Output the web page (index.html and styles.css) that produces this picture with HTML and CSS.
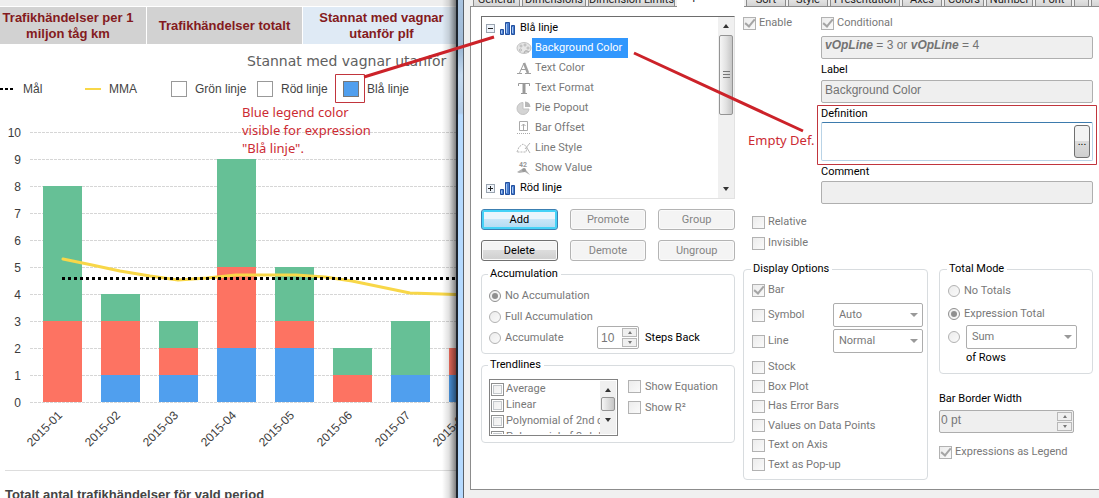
FILE: index.html
```html
<!DOCTYPE html>
<html lang="sv">
<head>
<meta charset="utf-8">
<title>Trafikhändelser</title>
<link rel="stylesheet" href="styles.css">
</head>
<body>
<div class="screen">
  <main class="report">
    <div class="strip"></div>
    <nav class="report-tabs">
      <a class="rtab" href="#km">Trafikhändelser per 1 miljon tåg km</a>
      <a class="rtab" href="#totalt">Trafikhändelser totalt</a>
      <a class="rtab rtab-on" href="#plf">Stannat med vagnar utanför plf</a>
    </nav>
    <h1 class="chart-title">Stannat med vagnar utanför</h1>
    <div class="legend-row">
      <span class="key"><i class="dots"></i>Mål</span>
      <span class="key"><i class="dash"></i>MMA</span>
      <span class="key"><i class="swatch"></i>Grön linje</span>
      <span class="key"><i class="swatch"></i>Röd linje</span>
      <span class="key"><i class="swatch blue"></i>Blå linje</span>
    </div>
    <svg class="chart" width="520" height="366" viewBox="0 104 520 366">
      <g class="grid">
        <path d="M30 132.500H520M30 159.500H520M30 186.500H520M30 213.500H520M30 240.500H520M30 267.500H520M30 294.500H520M30 321.500H520M30 348.500H520M30 375.500H520M30 402.500H520"/>
      </g>
      <g class="axis" text-anchor="end">
        <text x="21" y="137">10</text><text x="21" y="164">9</text><text x="21" y="191">8</text><text x="21" y="218">7</text><text x="21" y="245">6</text><text x="21" y="272">5</text><text x="21" y="299">4</text><text x="21" y="326">3</text><text x="21" y="353">2</text><text x="21" y="380">1</text><text x="21" y="407">0</text>
      </g>
      <path class="g" d="M43 186h39v135H43zM101 294h39v27h-39zM159 321h39v27h-39zM217 159h39v108h-39zM275 267h39v54h-39zM333 348h39v27h-39zM391 321h39v54h-39z"/>
      <path class="r" d="M43 321h39v81H43zM101 321h39v54h-39zM159 348h39v27h-39zM217 267h39v81h-39zM275 321h39v27h-39zM333 375h39v27h-39zM449 348h39v27h-39z"/>
      <path class="b" d="M101 375h39v27h-39zM159 375h39v27h-39zM217 348h39v54h-39zM275 348h39v54h-39zM391 375h39v27h-39zM449 375h39v27h-39z"/>
      <path class="mma" d="M63 259L92 265L120 271L150 276L178 280L207 278L236 275H296L325 277L352 281L381 287L410 293L468 295"/>
      <path class="goal" d="M62 278.500H520"/>
      <g class="axis dates" text-anchor="end">
        <text transform="translate(63 416) rotate(-45)">2015-01</text>
        <text transform="translate(121 416) rotate(-45)">2015-02</text>
        <text transform="translate(179 416) rotate(-45)">2015-03</text>
        <text transform="translate(237 416) rotate(-45)">2015-04</text>
        <text transform="translate(295 416) rotate(-45)">2015-05</text>
        <text transform="translate(353 416) rotate(-45)">2015-06</text>
        <text transform="translate(411 416) rotate(-45)">2015-07</text>
        <text transform="translate(469 416) rotate(-45)">2015-08</text>
      </g>
    </svg>
    <h2 class="below">Totalt antal trafikhändelser för vald period</h2>
    <div class="shadow"></div>
  </main>

  <section class="dialog">
    <div class="glass"></div>
    <div class="client">
      <div class="tabs">
        <button class="tab w-general">General</button>
        <button class="tab w-dim">Dimensions</button>
        <button class="tab w-limits">Dimension Limits</button>
        <button class="tab tab-on">Expressions</button>
        <button class="tab w-short">Sort</button>
        <button class="tab w-short">Style</button>
        <button class="tab w-pres">Presentation</button>
        <button class="tab w-short">Axes</button>
        <button class="tab w-short">Colors</button>
        <button class="tab w-general">Number</button>
        <button class="tab w-font">Font</button>
        <button class="tab w-nav" aria-label="Previous tabs"></button>
        <button class="tab w-nav" aria-label="Next tabs"></button>
      </div>
      <div class="panel">
        <div class="left">
          <div class="tree">
            <ul class="tree-list">
              <li class="node"><button class="expander" aria-label="Collapse"><svg width="9" height="9"><path d="M2 4.500H7" stroke="#222"/></svg></button>
                <svg class="bars" width="15" height="13"><path class="bar-ico" d="M.5 7.500h3v5h-3zM5.500 .5h4v12h-4zM11.500 3.500h3v9h-3z"/><path class="bar-lite" d="M1.500 8.500v3M6.500 2v9M12.500 5v6"/></svg><span>Blå linje</span></li>
              <li class="leaf"><svg width="16" height="16"><ellipse cx="8" cy="8" rx="7" ry="5.500" fill="#e6e6e6" stroke="#c4c4c4"/><g fill="#fff" stroke="#b0b0b0"><circle cx="5" cy="6" r="1"/><circle cx="9" cy="5" r="1"/><circle cx="12" cy="8" r="1"/><circle cx="4.500" cy="10" r="1"/></g><path d="M8 13q1-4 5-1" fill="#ccc" stroke="#aaa"/></svg><span class="selected">Background Color</span></li>
              <li class="leaf"><svg width="16" height="16" fill="none" stroke="#a0a0a0"><path d="M3.500 13L8 3" /><path d="M8 3l4 10" stroke-width="2.500"/><path d="M5 9.500h5M1 13.500h5M9 13.500h6"/></svg><span>Text Color</span></li>
              <li class="leaf"><svg width="16" height="16" fill="none" stroke="#999"><path d="M2.500 6V3.500h11V6M5 13.500h6"/><path d="M8 3v10" stroke-width="3"/></svg><span>Text Format</span></li>
              <li class="leaf"><svg width="16" height="16"><path d="M7 8V2.500A6 6 0 1 0 13 9H7z" fill="#d4d4d4" stroke="#c2c2c2"/><path d="M9 7V1.500a6 6 0 0 1 5.500 5.500z" fill="#b7b7b7"/></svg><span>Pie Popout</span></li>
              <li class="leaf"><svg width="16" height="16" fill="none" stroke="#aaa"><path d="M3.500 1.500h8v9h-8zM7.500 10V4M5.500 6l2-2 2 2"/><path d="M1 13.500h14" stroke-dasharray="1 1"/></svg><span>Bar Offset</span></li>
              <li class="leaf"><svg width="16" height="16" fill="none" stroke="#b5b5b5"><path d="M1 12l2-5 4-3 4 3-1 5H1" stroke-dasharray="2 1"/><path d="M9 9l5-6M11 8l3 5"/></svg><span>Line Style</span></li>
              <li class="leaf"><svg width="16" height="16"><text x="3" y="7" class="tiny">42</text><path d="M1 12l5-3 4 1 4 5-5-3-6 1z" fill="#b0b0b0"/><circle cx="8" cy="10" r="2" fill="#999"/></svg><span>Show Value</span></li>
              <li class="node"><button class="expander" aria-label="Expand"><svg width="9" height="9"><path d="M2 4.500H7M4.500 2V7" stroke="#222"/></svg></button>
                <svg class="bars" width="15" height="13"><path class="bar-ico" d="M.5 7.500h3v5h-3zM5.500 .5h4v12h-4zM11.500 3.500h3v9h-3z"/><path class="bar-lite" d="M1.500 8.500v3M6.500 2v9M12.500 5v6"/></svg><span>Röd linje</span></li>
            </ul>
            <div class="scroll"><i class="up"></i><i class="thumb"></i><i class="down"></i></div>
          </div>
          <div class="buttons">
            <button class="btn primary">Add</button><button class="btn" disabled>Promote</button><button class="btn" disabled>Group</button>
            <button class="btn">Delete</button><button class="btn" disabled>Demote</button><button class="btn" disabled>Ungroup</button>
          </div>
          <fieldset class="box accum">
            <legend>Accumulation</legend>
            <label class="opt"><input type="radio" name="acc" checked disabled>No Accumulation</label>
            <label class="opt"><input type="radio" name="acc" disabled>Full Accumulation</label>
            <div class="acc-row">
              <label class="opt"><input type="radio" name="acc" disabled>Accumulate</label>
              <span class="spin steps"><input type="text" id="steps" value="10" disabled><span class="spin-btns"><i class="up"></i><i class="down"></i></span></span>
              <label class="dark" for="steps">Steps Back</label>
            </div>
          </fieldset>
          <fieldset class="box trend">
            <legend>Trendlines</legend>
            <div class="trend-row">
              <div class="listbox">
                <div class="items">
                  <label class="item"><input type="checkbox" disabled>Average</label>
                  <label class="item"><input type="checkbox" disabled>Linear</label>
                  <label class="item"><input type="checkbox" disabled>Polynomial of 2nd degree</label>
                  <label class="item"><input type="checkbox" disabled>Polynomial of 3rd degree</label>
                </div>
                <div class="scroll small"><i class="up"></i><i class="thumb"></i><i class="down"></i></div>
              </div>
              <div class="trend-opts">
                <label class="opt"><input type="checkbox" disabled>Show Equation</label>
                <label class="opt"><input type="checkbox" disabled>Show R²</label>
              </div>
            </div>
          </fieldset>
        </div>

        <div class="right">
          <div class="form">
            <label class="opt"><input type="checkbox" checked disabled>Enable</label>
            <div class="fields">
              <label class="opt"><input type="checkbox" checked disabled>Conditional</label>
              <div class="field cond"><b>vOpLine</b> = 3 or <b>vOpLine</b> = 4</div>
              <label class="dark" for="lbl">Label</label>
              <input class="field" id="lbl" type="text" value="Background Color" disabled>
              <label class="dark" for="def">Definition</label>
              <div class="definition"><textarea id="def"></textarea><button class="more" aria-label="Edit definition">...</button></div>
              <label class="dark" for="com">Comment</label>
              <input class="field" id="com" type="text" disabled>
            </div>
          </div>
          <div class="flags">
            <label class="opt"><input type="checkbox" disabled>Relative</label>
            <label class="opt"><input type="checkbox" disabled>Invisible</label>
          </div>
          <div class="lower">
            <fieldset class="box display">
              <legend>Display Options</legend>
              <label class="opt first"><input type="checkbox" checked disabled>Bar</label>
              <div class="pick"><label class="opt"><input type="checkbox" disabled>Symbol</label><span class="sel"><select aria-label="Symbol style" disabled><option>Auto</option></select></span></div>
              <div class="pick"><label class="opt"><input type="checkbox" disabled>Line</label><span class="sel"><select aria-label="Line style" disabled><option>Normal</option></select></span></div>
              <div class="checks">
                <label class="opt"><input type="checkbox" disabled>Stock</label>
                <label class="opt"><input type="checkbox" disabled>Box Plot</label>
                <label class="opt"><input type="checkbox" disabled>Has Error Bars</label>
                <label class="opt"><input type="checkbox" disabled>Values on Data Points</label>
                <label class="opt"><input type="checkbox" disabled>Text on Axis</label>
                <label class="opt"><input type="checkbox" disabled>Text as Pop-up</label>
              </div>
            </fieldset>
            <div class="side">
              <fieldset class="box total">
                <legend>Total Mode</legend>
                <label class="opt"><input type="radio" name="tot" disabled>No Totals</label>
                <label class="opt"><input type="radio" name="tot" checked disabled>Expression Total</label>
                <div class="sum"><input type="radio" name="tot" aria-label="Aggregate of rows" disabled><span class="sel"><select id="agg" disabled><option>Sum</option></select></span></div>
                <label class="dark rows" for="agg">of Rows</label>
              </fieldset>
              <label class="dark bw" for="bw">Bar Border Width</label>
              <span class="spin width"><input type="text" id="bw" value="0 pt" disabled><span class="spin-btns"><i class="up"></i><i class="down"></i></span></span>
              <label class="opt asleg"><input type="checkbox" checked disabled>Expressions as Legend</label>
            </div>
          </div>
        </div>
      </div>
    </div>
  </section>

  <svg class="marks" width="1099" height="498">
    <path class="thin" d="M335.500 74.500h29v28h-29zM817.500 105.500h279v59h-279z"/>
    <path class="arrow" d="M364 77L494 37M634 53L803 131"/>
  </svg>
  <p class="note note-legend">Blue legend color<br>visible for expression<br>"Blå linje".</p>
  <p class="note note-def">Empty Def.</p>
</div>
</body>
</html>
```
FILE: styles.css
```css
* { box-sizing: border-box; }
body { margin: 0; background: #fff; overflow: hidden; }
button, input, select, textarea { font: inherit; margin: 0; }
button { padding: 0; }
.screen { position: relative; display: grid; grid-template-columns: 456fr 643fr; height: 100vh; overflow: hidden; }

/* Report */
.report { position: relative; overflow: hidden; min-width: 0; font: 12px/16px "Liberation Sans", Arial, sans-serif; color: #444; }
.strip { height: 6px; background: #eee; }
.report-tabs { display: grid; grid-template-columns: 146fr 155fr 153fr; gap: 1px; padding-top: 1px; }
.rtab { display: flex; align-items: center; justify-content: center; height: 37px; background: #d2d2d2; color: #841a20; font-size: 13px; font-weight: bold; text-align: center; text-decoration: none; }
.rtab:first-child { padding-right: 10px; }
.rtab-on { background: #dfeaf5; padding: 0 8px 0 12px; }
.chart-title { margin: 8px 0 0 247px; font: 14px/18px "DejaVu Sans", Verdana, sans-serif; color: #606060; white-space: nowrap; }
.legend-row { display: grid; grid-template-columns: 85px 86px 86px 86px auto; height: 30px; margin-top: 4px; align-items: center; }
.key { display: flex; align-items: center; gap: 8px; white-space: nowrap; }
.dots { width: 15px; height: 2px; background: repeating-linear-gradient(90deg, #000 0 3px, transparent 3px 5px); }
.dash { width: 16px; height: 2px; background: #f8d748; }
.swatch { width: 16px; height: 16px; border: 1px solid #999; background: #fff; }
.swatch.blue { background: #509fee; border-color: #777; }
.chart { display: block; }
.grid { fill: none; stroke: #d6d6d6; stroke-dasharray: 3 1; }
.axis { font-size: 12px; fill: #3c3c3c; }
.g { fill: #66c096; }
.r { fill: #fd7362; }
.b { fill: #509fee; }
.mma { fill: none; stroke: #f8d748; stroke-width: 3; stroke-linecap: round; stroke-linejoin: round; }
.goal { stroke: #000; stroke-width: 3; stroke-dasharray: 3 3; }
.below { margin: 0 0 0 5px; padding-top: 16px; border-top: 1px solid #ddd; font-size: 13px; line-height: 16px; white-space: nowrap; }
.shadow { position: absolute; top: 0; right: 0; bottom: 0; width: 14px; background: linear-gradient(90deg, transparent, rgba(0,0,0,.12) 50%, rgba(0,0,0,.5)); }

/* Dialog */
.dialog { display: flex; min-width: 0; border-left: 2px solid #1d242d; background: #f0f0f0; font: 11px/14px Roboto, "Liberation Sans", sans-serif; color: #787878; }
.glass { flex: none; width: 6px; border-right: 1px solid #59616b; background: linear-gradient(#a9c3df 0, #9fb9d5 50px, #c4daf0 75px, #b0cbe8 113px, #b5daff 115px, #b5daff 100%); }
.client { flex: 1; min-width: 0; display: flex; flex-direction: column; padding: 0 0 8px 6px; }
.tabs { position: relative; flex: none; display: flex; align-items: flex-end; height: 7px; margin-bottom: -1px; overflow: hidden; padding-left: 3px; gap: 2px; }
.tab { flex: none; height: 12px; margin-bottom: 1px; border: 1px solid #8b8b8b; border-width: 0 1px; background: linear-gradient(#f2f2f2, #d4d4d4); color: #222; line-height: 12px; white-space: nowrap; }
.tab-on { width: 67px; height: 20px; margin-bottom: 0; background: #fff; border: 0; }
.w-general { width: 47px; }
.w-dim { width: 64px; }
.w-limits { width: 87px; }
.w-short { width: 40px; }
.w-pres { width: 70px; }
.w-font { width: 37px; }
.w-nav { width: 15px; }
.panel { flex: 1; display: grid; grid-template-columns: 254fr 350fr; gap: 8px; padding: 9px 6px 0 10px; border: solid #8c8c8c; border-width: 1px 0 1px 1px; background: #fff; }
.left, .right { min-width: 0; }

.tree { display: flex; height: 183px; border: 1px solid #e2e2e2; border-top: 1px solid #6d6d6d; border-left: 1px solid #6d6d6d; }
.tree-list { flex: 1; min-width: 0; margin: 0; padding: 1px 0 0; list-style: none; overflow: hidden; }
.node, .leaf { display: flex; align-items: center; height: 20px; }
.node { padding-left: 4px; color: #000; }
.leaf { padding-left: 34px; }
.leaf span { padding: 3px; }
.leaf .selected { background: #3197fd; color: #fff; padding: 3px 6px 3px 3px; }
.expander { width: 9px; height: 9px; border: 0; background: #eef3fa; outline: 1px solid #9aa4b0; outline-offset: -1px; display: flex; }
.bars { margin: 0 5px; }
.bar-ico { fill: #4a7fd0; stroke: #24509e; }
.bar-lite { stroke: #a7c8f5; }
.tiny { font: bold 7px Roboto, sans-serif; fill: #999; }

.scroll { flex: none; width: 16px; display: flex; flex-direction: column; align-items: center; background: #f0f0f0; }
.up, .down { width: 0; height: 0; border: 3px solid transparent; }
.up { border-top: 0; border-bottom: 4px solid #333; }
.down { border-bottom: 0; border-top: 4px solid #333; }
.scroll .up { margin: 7px 0; }
.scroll .down { margin: auto 0 7px; }
.thumb { width: 14px; height: 80px; border: 1px solid #949494; border-radius: 2px; background: repeating-linear-gradient(#777 0 1px, transparent 1px 3px) center / 7px 9px no-repeat, linear-gradient(90deg, #f5f5f5, #e2e2e2 50%, #c6c6c6); }

.buttons { display: grid; grid-template-columns: repeat(3, 1fr); gap: 10px 12px; margin-top: 10px; }
.btn { height: 21px; border: 1px solid #707070; border-radius: 3px; background: linear-gradient(#f3f3f3 0 49%, #dcdcdc 50%, #cfcfcf); color: #000; box-shadow: inset 0 0 0 1px #fafafa; }
.btn.primary { border-color: #3c7fb1; background: linear-gradient(#eaf5fc 0 49%, #c8e6f8 50%, #b0daf2); box-shadow: inset 0 0 0 2px #45d2f7; }
.btn:disabled { border-color: #b4b4b4; background: #f4f4f4; color: #848484; }

.box { min-width: 0; margin: 0; border: 1px solid #d8dcdf; border-radius: 4px; }
.box legend { padding: 0 3px 0 2px; margin-left: -1px; color: #000; }
.dark { color: #000; }
.opt { display: flex; align-items: center; gap: 4px; white-space: nowrap; }
input[type=checkbox], input[type=radio] { appearance: none; flex: none; width: 13px; height: 13px; border: 1px solid #b2b2b2; background: linear-gradient(135deg, #ececec, #fafafa); display: grid; place-items: center; }
input[type=radio] { width: 12px; height: 12px; border-radius: 50%; }
input[type=radio]:checked::after { content: ""; width: 6px; height: 6px; border-radius: 50%; background: #8f8f8f; }
input[type=radio]:checked { border-color: #8f8f8f; }
input[type=checkbox]:checked::after { content: ""; width: 4px; height: 8px; border: solid #a5a5a5; border-width: 0 2px 2px 0; transform: rotate(40deg); margin-top: -2px; }

.accum { margin-top: 6px; padding: 4px 7px 5px; }
.accum .opt { height: 21px; }
.acc-row { display: flex; align-items: center; height: 21px; }
.acc-row .opt { width: 108px; }
.spin { display: flex; border: 1px solid #adadad; border-radius: 2px; background: #fff; }
.spin input { flex: 1; min-width: 0; border: 0; padding: 0 3px; background: none; color: #777; font: 12px "Liberation Sans", Arial, sans-serif; }
.steps { width: 42px; height: 23px; margin-right: 6px; }
.spin-btns { flex: none; display: grid; gap: 1px; width: 15px; margin: 1px; }
.spin-btns i { width: auto; height: auto; display: grid; place-items: center; border: 1px solid #b8b8b8; background: #f0f0f0; }
.spin-btns i::after { content: ""; border: 2px solid transparent; border-top: 0; border-bottom: 3px solid #777; }
.spin-btns .down::after { border-bottom: 0; border-top: 3px solid #777; }

.trend { margin-top: 4px; padding: 7px 7px 6px; }
.trend-row { display: flex; gap: 10px; }
.listbox { flex: none; display: flex; width: 129px; height: 57px; padding: 1px; border: 1px solid #828282; overflow: hidden; }
.items { flex: 1; min-width: 0; overflow: hidden; }
.item { display: flex; align-items: center; gap: 2px; height: 16px; white-space: nowrap; }
.item input[type=checkbox] { border-color: #8e8f8f; box-shadow: inset 0 0 0 1px #fff, inset 0 0 0 2px #c4c8cc; }
.small .thumb { height: 14px; background: linear-gradient(90deg, #f5f5f5, #c6c6c6); }
.small .up, .small .down { margin: 7px 0 5px; }
.trend-opts { display: grid; gap: 8px; align-content: start; padding-top: 1px; }
.trend-opts .opt { height: 13px; }

.form { display: grid; grid-template-columns: 78px 1fr; align-items: start; }
.form .opt { height: 14px; gap: 3px; }
.fields { display: flex; flex-direction: column; min-width: 0; }
.field { height: 23px; margin: 3px 0 4px; padding: 0 3px; border: 1px solid #afafaf; border-radius: 2px; background: #efefef; color: #737373; font: 12px/16px "Liberation Sans", Arial, sans-serif; }
.cond { margin-top: 6px; }
.cond b { font-style: italic; }
input.field { padding-bottom: 3px; }
.fields .dark { line-height: 14px; }
.definition { display: flex; height: 39px; margin: 1px 0 4px; padding: 2px; border: 1px solid #b9d3e6; border-top-color: #3d7bad; border-radius: 2px; }
.definition textarea { flex: 1; min-width: 0; border: 0; padding: 2px; resize: none; outline: 0; }
.more { width: 16px; border: 1px solid #707070; border-radius: 3px; background: linear-gradient(#f3f3f3 0 49%, #dcdcdc 50%, #cfcfcf); color: #000; }
#com { margin-top: 2px; }

.flags { display: grid; gap: 7px; padding-left: 9px; margin-top: 7px; }
.flags .opt, .checks .opt { height: 14px; gap: 3px; }
.lower { display: grid; grid-template-columns: minmax(0, 185fr) minmax(0, 154fr); gap: 11px; margin-top: 12px; }
.display { padding: 4px 4px 7px 8px; }
.display .opt { gap: 3px; }
.first { height: 20px; margin-bottom: 2px; }
.pick { display: grid; grid-template-columns: 1fr 90px; align-items: center; height: 26px; }
.sel { position: relative; display: block; flex: 1; min-width: 0; }
.sel select { display: block; width: 100%; height: 24px; padding: 0 5px; appearance: none; border: 1px solid #adadad; border-radius: 2px; background: #fff; color: #787878; opacity: 1; }
.sel::after { content: ""; position: absolute; right: 5px; top: 10px; border: 4px solid transparent; border-top-color: #999; border-bottom: 0; }
.checks { display: flex; flex-direction: column; justify-content: space-between; min-height: 112px; margin-top: 6px; }
.total { padding: 3px 15px 8px 8px; }
.total > .opt { height: 23px; }
.sum { display: flex; align-items: center; gap: 6px; height: 24px; }
.rows { display: block; margin: 2px 0 0 18px; }
.side { display: flex; flex-direction: column; min-width: 0; }
.bw { margin-top: 18px; }
.width { height: 23px; margin: 4px 19px 0 0; background: #efefef; }
.width input { padding: 0 1px 4px; }
.asleg { margin-top: 12px; gap: 3px; }

/* Annotations lie over both windows */
.marks { position: absolute; left: 0; top: 0; pointer-events: none; fill: none; }
.thin { stroke: #c1353d; }
.arrow { stroke: #cc2229; stroke-width: 3; }
.note { position: absolute; margin: 0; font: 13px/18px "Noto Sans", "Open Sans", sans-serif; color: #cc2b33; white-space: nowrap; }
.note-legend { left: 242px; top: 103px; }
.note-def { left: 748px; top: 131px; }
```
